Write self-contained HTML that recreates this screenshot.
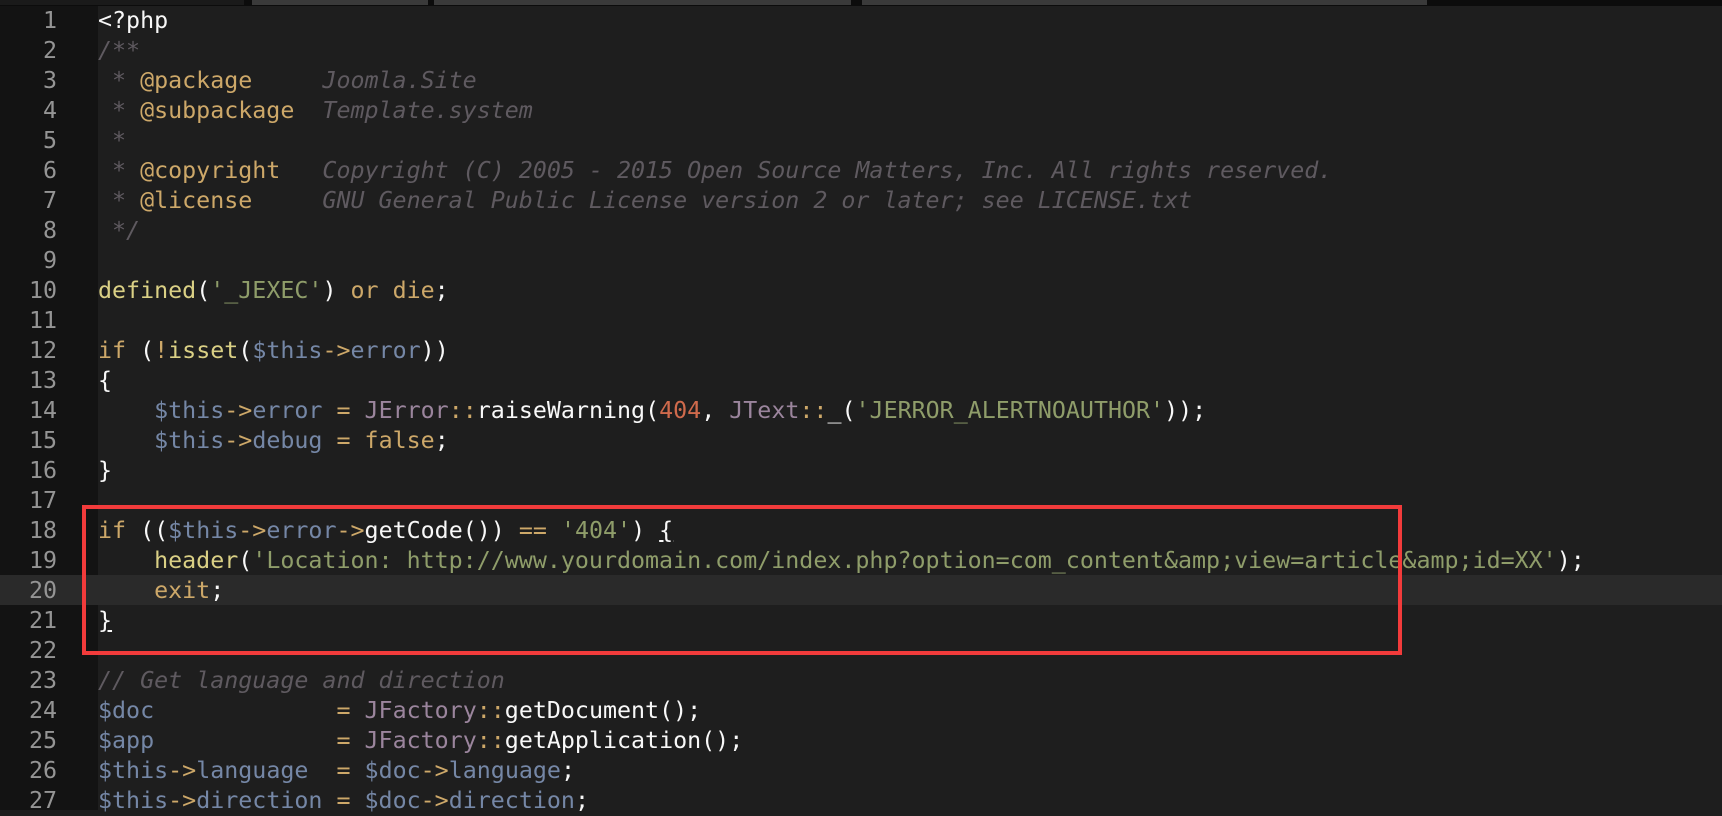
<!DOCTYPE html>
<html><head><meta charset="utf-8"><style>
html,body{margin:0;padding:0;}
body{width:1722px;height:810px;overflow:hidden;background:#1e1e1e;position:relative;font-family:"DejaVu Sans Mono","Liberation Mono",monospace;font-size:23.3px;}
#top{position:absolute;left:0;top:0;width:1722px;height:6px;background:#0c0c0c;}
#top div{position:absolute;top:0;height:5px;background:#3a3a3a;}
#gut{position:absolute;left:0;top:6px;width:98px;height:804px;background:#131313;}
.hl{position:absolute;left:0;width:1722px;height:30px;background:#2a2a2a;}
.ln,.cl{position:absolute;height:30px;line-height:31px;}
.ln{left:0;width:57px;text-align:right;color:#959595;}
.cl{left:98px;white-space:pre;color:#f8f8f8;}
.c{color:#5f5a60;font-style:italic}
.k{color:#cda869}
.v{color:#7587a6}
.s{color:#8f9d6a}
.f{color:#dad085}
.n{color:#cf6a4c}
.p{color:#9b859d}
.u{text-decoration:underline;}
#box{position:absolute;left:82px;top:505px;width:1312px;height:142px;border:4px solid #f23b3b;}
</style></head><body>
<div id="top"><div style="left:0;width:244px;background:#1a1a1a"></div><div style="left:252px;width:176px"></div><div style="left:434px;width:417px"></div><div style="left:862px;width:565px"></div></div>
<div id="gut"></div>
<div class="hl" style="top:575px"></div>
<div class="ln" style="top:5px">1</div>
<div class="ln" style="top:35px">2</div>
<div class="ln" style="top:65px">3</div>
<div class="ln" style="top:95px">4</div>
<div class="ln" style="top:125px">5</div>
<div class="ln" style="top:155px">6</div>
<div class="ln" style="top:185px">7</div>
<div class="ln" style="top:215px">8</div>
<div class="ln" style="top:245px">9</div>
<div class="ln" style="top:275px">10</div>
<div class="ln" style="top:305px">11</div>
<div class="ln" style="top:335px">12</div>
<div class="ln" style="top:365px">13</div>
<div class="ln" style="top:395px">14</div>
<div class="ln" style="top:425px">15</div>
<div class="ln" style="top:455px">16</div>
<div class="ln" style="top:485px">17</div>
<div class="ln" style="top:515px">18</div>
<div class="ln" style="top:545px">19</div>
<div class="ln" style="top:575px">20</div>
<div class="ln" style="top:605px">21</div>
<div class="ln" style="top:635px">22</div>
<div class="ln" style="top:665px">23</div>
<div class="ln" style="top:695px">24</div>
<div class="ln" style="top:725px">25</div>
<div class="ln" style="top:755px">26</div>
<div class="ln" style="top:785px">27</div>

<div class="cl" style="top:5px">&lt;?php</div>
<div class="cl c" style="top:35px">/**</div>
<div class="cl c" style="top:65px"> * <span class="k" style="font-style:normal">@package</span>     Joomla.Site</div>
<div class="cl c" style="top:95px"> * <span class="k" style="font-style:normal">@subpackage</span>  Template.system</div>
<div class="cl c" style="top:125px"> *</div>
<div class="cl c" style="top:155px"> * <span class="k" style="font-style:normal">@copyright</span>   Copyright (C) 2005 - 2015 Open Source Matters, Inc. All rights reserved.</div>
<div class="cl c" style="top:185px"> * <span class="k" style="font-style:normal">@license</span>     GNU General Public License version 2 or later; see LICENSE.txt</div>
<div class="cl c" style="top:215px"> */</div>
<div class="cl" style="top:275px"><span class="f">defined</span>(<span class="s">'_JEXEC'</span>) <span class="k">or die</span>;</div>
<div class="cl" style="top:335px"><span class="k">if</span> (<span class="k">!</span><span class="f">isset</span>(<span class="v">$this</span><span class="k">-&gt;</span><span class="v">error</span>))</div>
<div class="cl" style="top:365px">{</div>
<div class="cl" style="top:395px">    <span class="v">$this</span><span class="k">-&gt;</span><span class="v">error</span> <span class="k">=</span> <span class="p">JError</span><span class="k">::</span>raiseWarning(<span class="n">404</span>, <span class="p">JText</span><span class="k">::</span>_(<span class="s">'JERROR_ALERTNOAUTHOR'</span>));</div>
<div class="cl" style="top:425px">    <span class="v">$this</span><span class="k">-&gt;</span><span class="v">debug</span> <span class="k">=</span> <span class="k">false</span>;</div>
<div class="cl" style="top:455px">}</div>
<div class="cl" style="top:515px"><span class="k">if</span> ((<span class="v">$this</span><span class="k">-&gt;</span><span class="v">error</span><span class="k">-&gt;</span>getCode()) <span class="k">==</span> <span class="s">'404'</span>) <span class="u">{</span></div>
<div class="cl" style="top:545px">    <span class="f">header</span>(<span class="s">'Location: http://www.yourdomain.com/index.php?option=com_content&amp;amp;view=article&amp;amp;id=XX'</span>);</div>
<div class="cl" style="top:575px">    <span class="k">exit</span>;</div>
<div class="cl" style="top:605px"><span class="u">}</span></div>
<div class="cl c" style="top:665px">// Get language and direction</div>
<div class="cl" style="top:695px"><span class="v">$doc</span>             <span class="k">=</span> <span class="p">JFactory</span><span class="k">::</span>getDocument();</div>
<div class="cl" style="top:725px"><span class="v">$app</span>             <span class="k">=</span> <span class="p">JFactory</span><span class="k">::</span>getApplication();</div>
<div class="cl" style="top:755px"><span class="v">$this</span><span class="k">-&gt;</span><span class="v">language</span>  <span class="k">=</span> <span class="v">$doc</span><span class="k">-&gt;</span><span class="v">language</span>;</div>
<div class="cl" style="top:785px"><span class="v">$this</span><span class="k">-&gt;</span><span class="v">direction</span> <span class="k">=</span> <span class="v">$doc</span><span class="k">-&gt;</span><span class="v">direction</span>;</div>
<div id="box"></div>
</body></html>
